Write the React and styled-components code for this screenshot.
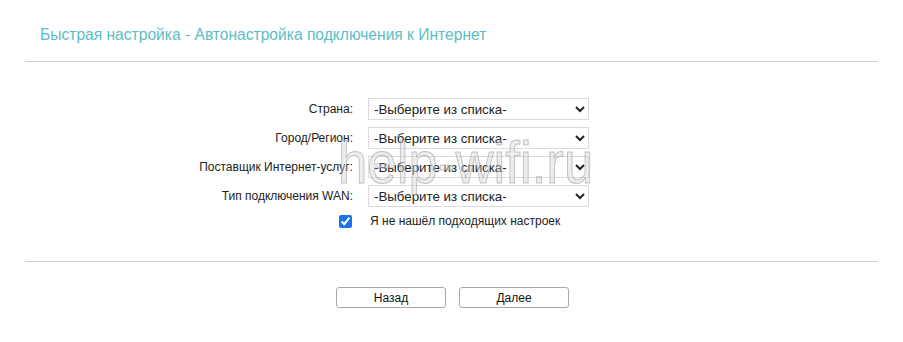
import React from "react";
import styled, { createGlobalStyle } from "styled-components";

const GlobalStyle = createGlobalStyle`
  body {
    margin: 0;
    background: #ffffff;
    font-family: "Liberation Sans", Arial, sans-serif;
  }
`;

const Page = styled.div`
  position: relative;
  padding: 0 25px;
  width: 903px;
  box-sizing: border-box;
`;

const Title = styled.h1`
  margin: 0;
  padding: 25px 0 16px 15px;
  font-size: 15.6px;
  line-height: 20px;
  font-weight: normal;
  color: #5cbec6;
  border-bottom: 1px solid #cfcfcf;
`;

const Form = styled.div`
  display: grid;
  grid-template-columns: 328px 221px;
  column-gap: 15px;
  row-gap: 7px;
  align-items: center;
  padding: 36px 0 0;
`;

const Label = styled.label`
  font-size: 12px;
  color: #222;
  text-align: right;
  white-space: nowrap;
`;

const Select = styled.select`
  height: 22px;
  width: 221px;
  font-family: "Liberation Sans", Arial, sans-serif;
  font-size: 13.3px;
  color: #222;
  background: #fff;
  border: 1px solid #dcdcdc;
  border-radius: 0;
  padding: 0 1px;
`;

const CheckRow = styled.div`
  grid-column: 1 / 3;
  display: grid;
  grid-template-columns: 328px 221px;
  column-gap: 15px;
  align-items: center;
`;

const Check = styled.input`
  justify-self: end;
  margin: 0 1px 0 0;
  width: 13px;
  height: 13px;
  accent-color: #1a73e8;
`;

const CheckText = styled.span`
  font-size: 12px;
  color: #222;
  padding-left: 2px;
`;

const Divider = styled.hr`
  border: 0;
  border-top: 1px solid #cfcfcf;
  margin: 33px 0 0;
`;

const Buttons = styled.div`
  display: flex;
  justify-content: center;
  gap: 13px;
  padding-top: 25px;
  padding-left: 2px;
`;

const Button = styled.button`
  width: 110px;
  height: 21px;
  background: #fff;
  border: 1px solid #a8a8a8;
  border-radius: 3px;
  font-family: "Liberation Sans", Arial, sans-serif;
  font-size: 12px;
  color: #111;
  padding: 0;
`;

const Watermark = styled.div`
  position: absolute;
  left: 338px;
  top: 128px;
  font-family: "Liberation Sans", Arial, sans-serif;
  font-size: 60px;
  line-height: 70px;
  transform: scaleX(0.88);
  transform-origin: left top;
  color: rgba(215, 215, 215, 0.45);
  -webkit-text-stroke: 1px rgba(150, 150, 150, 0.55);
  pointer-events: none;
  white-space: nowrap;
`;

const fields = [
  "Страна:",
  "Город/Регион:",
  "Поставщик Интернет-услуг:",
  "Тип подключения WAN:",
];

export default function App() {
  return (
    <Page>
      <GlobalStyle />
      <Title>Быстрая настройка - Автонастройка подключения к Интернет</Title>
      <Form>
        {fields.map((f) => (
          <React.Fragment key={f}>
            <Label>{f}</Label>
            <Select defaultValue="">
              <option value="">-Выберите из списка-</option>
            </Select>
          </React.Fragment>
        ))}
        <CheckRow>
          <Check type="checkbox" defaultChecked />
          <CheckText>Я не нашёл подходящих настроек</CheckText>
        </CheckRow>
      </Form>
      <Divider />
      <Buttons>
        <Button>Назад</Button>
        <Button>Далее</Button>
      </Buttons>
      <Watermark>help-wifi.ru</Watermark>
    </Page>
  );
}
